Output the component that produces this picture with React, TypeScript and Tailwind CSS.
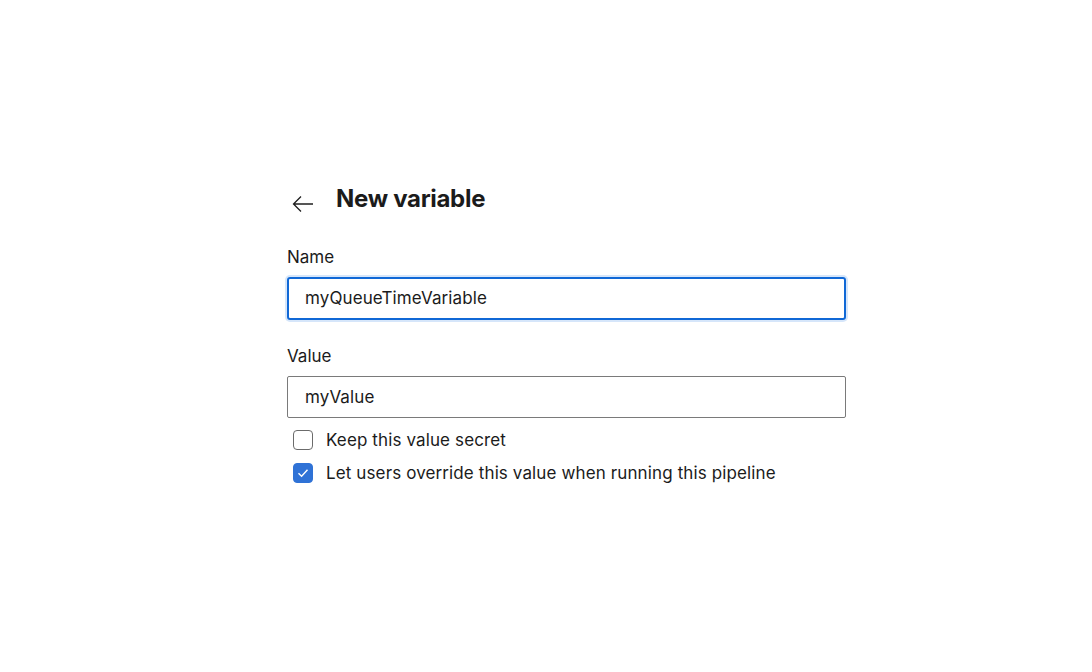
import React from "react"

function BackArrow() {
  return (
    <svg width="24" height="24" viewBox="0 0 24 24" fill="none" stroke="#1f1f1f" strokeWidth="1.3">
      <path d="M22 12H2.5M10 4.5L2.5 12L10 19.5" />
    </svg>
  )
}

function Check({ checked }: { checked: boolean }) {
  return (
    <span
      className={
        checked
          ? "flex h-5 w-5 items-center justify-center rounded-[4px] border border-[#2f72d6] bg-[#2f72d6]"
          : "flex h-5 w-5 items-center justify-center rounded-[4px] border border-[#6b6b6b] bg-white"
      }
    >
      {checked && (
        <svg width="14" height="14" viewBox="0 0 14 14" fill="none" stroke="white" strokeWidth="1.4">
          <path d="M2.5 7.2L5.6 10.2L11.5 3.8" />
        </svg>
      )}
    </span>
  )
}

export default function App() {
  return (
    <div className="flex h-[672px] w-[1092px] bg-white pl-[287px] font-['Inter',sans-serif] text-[#1b1b1b]">
      <div className="mt-[181px] flex w-[559px] flex-col">
        <div className="flex items-center">
          <span className="mt-[9px] ml-[4px] flex w-[45px]">
            <BackArrow />
          </span>
          <h1 className="text-[24px] font-bold tracking-[-0.3px]">New variable</h1>
        </div>

        <label className="mt-[29px] text-[17px] leading-[22px]">Name</label>
        <div className="mt-[9px] flex h-[43px] items-center rounded-[3px] border-2 border-[#1068d6] px-[16px] shadow-[0_0_0_2px_#d6e6fa]">
          <span className="mt-[1px] text-[17px] tracking-[0.1px]">myQueueTimeVariable</span>
        </div>

        <label className="mt-[25px] text-[17px] leading-[22px]">Value</label>
        <div className="mt-[9px] flex h-[42px] items-center rounded-[2px] border border-[#7a7a7a] px-[17px]">
          <span className="mt-[1px] text-[17px] tracking-[0.1px]">myValue</span>
        </div>

        <div className="mt-[10px] flex flex-col gap-[9px] pl-[6px]">
          <div className="flex h-6 items-center gap-[13px]">
            <Check checked={false} />
            <span className="text-[17px] leading-6 tracking-[0.12px]">Keep this value secret</span>
          </div>
          <div className="flex h-6 items-center gap-[13px]">
            <Check checked={true} />
            <span className="text-[17px] leading-6 tracking-[0.12px]">Let users override this value when running this pipeline</span>
          </div>
        </div>
      </div>
    </div>
  )
}
